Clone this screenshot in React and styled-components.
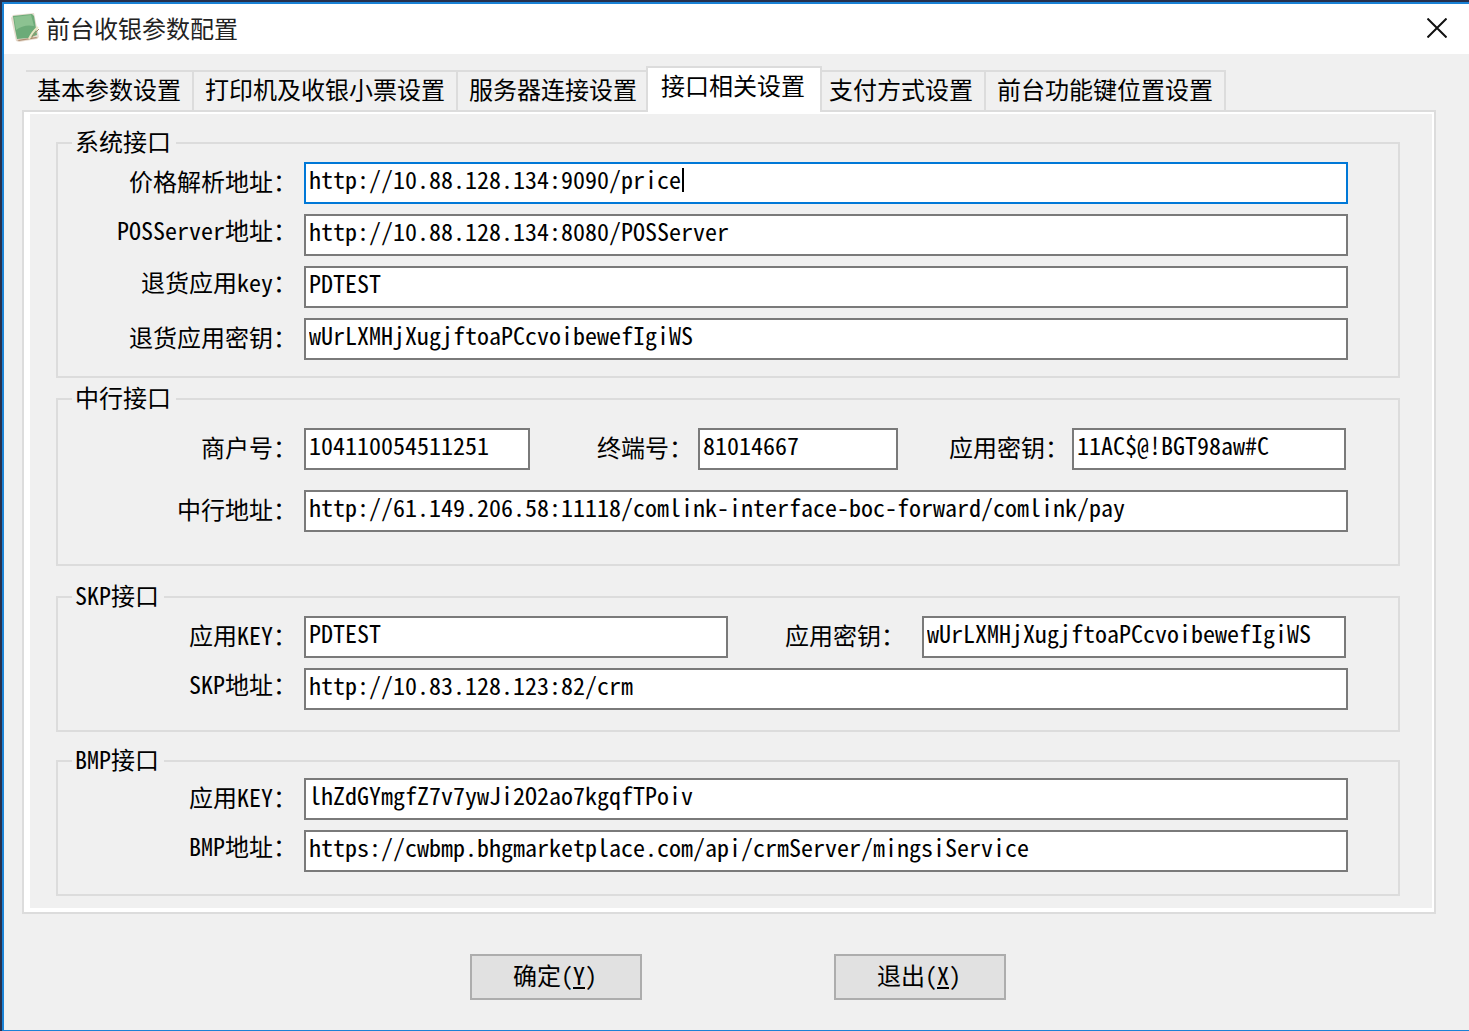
import { useState } from 'react'
import styled, { createGlobalStyle, css } from 'styled-components'

const GlobalStyle = createGlobalStyle`
  * {
    box-sizing: border-box;
  }
  body {
    margin: 0;
    background: #26304d;
    color: #000;
  }
  body, button, input {
    font-family: 'Noto Sans CJK SC', sans-serif;
    font-size: 24px;
    line-height: 24px;
    font-feature-settings: 'hwid';
  }
  button {
    color: #000;
  }
`

const Window = styled.div`
  display: flex;
  flex-direction: column;
  min-height: calc(100vh - 2px);
  margin: 2px 0 0 2px;
  border: solid #1a82d6;
  border-width: 2px 0 1px 2px;
  background: #f0f0f0;
`

const TitleBar = styled.header`
  display: flex;
  align-items: center;
  height: 50px;
  padding: 0 22px 2px 6px;
  background: #fff;
`

const Title = styled.h1`
  flex: 1;
  margin: 0 0 0 6px;
  color: #222;
  font-size: 24px;
  font-weight: 400;
`

const CloseButton = styled.button`
  display: flex;
  padding: 0;
  border: none;
  background: none;
`

const Tabs = styled.nav`
  display: flex;
  align-items: flex-end;
  margin: 12px 33px 0 22px;
`

const Tab = styled.button`
  height: 40px;
  padding: 0 11px 4px;
  border: solid #dcdcdc;
  border-width: 2px 2px 0 0;
  background: #f0f0f0;
  white-space: nowrap;

  ${({ $active }) =>
    $active &&
    css`
      position: relative;
      height: 46px;
      margin: 0 -4px -2px;
      padding: 0 15px 10px 13px;
      border-left-width: 2px;
      background: #fff;
    `}
`

const Panel = styled.main`
  margin: 0 33px 0 18px;
  border: 2px solid #dcdcdc;
  background: #fff;
  padding: 2px 2px 4px 6px;
`

const PanelBody = styled.div`
  padding: 17px 32px 12px 26px;
  background: #f0f0f0;
`

const Group = styled.fieldset`
  display: block;
  min-width: 0;
  margin: ${({ $gap = 0 }) => $gap}px 0 0;
  border: 2px solid #dcdcdc;
  padding: ${({ $top }) => $top}px 50px ${({ $bottom }) => $bottom}px 0;
`

const Legend = styled.legend`
  margin-left: 14px;
  padding: 0 5px 4px 3px;
  line-height: 20px;
`

const Rows = styled.div`
  display: grid;
  gap: ${({ $gap = 10 }) => $gap}px;
`

const Row = styled.div`
  display: grid;
  grid-template-columns: ${({ $columns = '243px 1fr' }) => $columns};
  column-gap: 3px;
  padding-right: ${({ $inset = 0 }) => $inset}px;
`

const Label = styled.label`
  padding-right: ${({ $pad = 4 }) => $pad}px;
  line-height: ${({ $raised }) => ($raised ? 32 : 38)}px;
  text-align: right;
  white-space: nowrap;
`

const InputWrapper = styled.div`
  position: relative;
  min-width: 0;
`

const Input = styled.input`
  display: block;
  width: 100%;
  height: 42px;
  padding: 0 3px 10px;
  border: 2px solid ${({ $focused }) => ($focused ? '#0078d7' : '#7a7a7a')};
  border-radius: 0;
  background: #fff;
  color: #000;
  outline: none;
  caret-color: transparent;
`

const Caret = styled.span`
  position: absolute;
  top: 6px;
  width: 2px;
  height: 24px;
  background: #000;
`

const Footer = styled.footer`
  display: flex;
  justify-content: center;
  gap: 192px;
  padding: 40px 0 30px 3px;
`

const Button = styled.button`
  width: 172px;
  height: 46px;
  padding: 0 2px 4px 0;
  border: 2px solid #adadad;
  background: #e1e1e1;
`

const CHAR_WIDTH = 12

const tabs = [
  '基本参数设置',
  '打印机及收银小票设置',
  '服务器连接设置',
  '接口相关设置',
  '支付方式设置',
  '前台功能键位置设置',
]

const initialValues = {
  priceUrl: 'http://10.88.128.134:9090/price',
  posUrl: 'http://10.88.128.134:8080/POSServer',
  refundKey: 'PDTEST',
  refundSecret: 'wUrLXMHjXugjftoaPCcvoibewefIgiWS',
  bocMerchant: '104110054511251',
  bocTerminal: '81014667',
  bocSecret: '11AC$@!BGT98aw#C',
  bocUrl: 'http://61.149.206.58:11118/comlink-interface-boc-forward/comlink/pay',
  skpKey: 'PDTEST',
  skpSecret: 'wUrLXMHjXugjftoaPCcvoibewefIgiWS',
  skpUrl: 'http://10.83.128.123:82/crm',
  bmpKey: 'lhZdGYmgfZ7v7ywJi2O2ao7kgqfTPoiv',
  bmpUrl: 'https://cwbmp.bhgmarketplace.com/api/crmServer/mingsiService',
}

const NotebookIcon = () => (
  <svg width="30" height="32" viewBox="0 0 30 32" aria-hidden="true">
    <path d="M1 6 L3 3 L24 1 L29 25 L27 27 L9 30 L6 29 Z" fill="#e6dccf" />
    <path d="M7 28 L26 25 L28 26 L9 29 Z" fill="#b08f74" />
    <path d="M3 4 L22 2 L24 4 L27 23 L18 26 L7 27 L5 17 Z" fill="#6cab78" />
    <path d="M4 5 L21 3 L24 14 Q14 12 6 18 Z" fill="#8cc291" />
    <path d="M19 27 Q22 20 28 15" stroke="#e9e6c3" strokeWidth="2" fill="none" />
    <path d="M21 27 Q24 21 29 17" stroke="#a58f6a" strokeWidth="1" fill="none" />
  </svg>
)

const Field = ({ name, label, values, onChange, focused, raised, pad }) => (
  <>
    <Label htmlFor={name} $raised={raised} $pad={pad}>
      {label}：
    </Label>
    <InputWrapper>
      <Input
        id={name}
        name={name}
        type="text"
        spellCheck={false}
        value={values[name]}
        onChange={onChange}
        $focused={focused}
      />
      {focused && (
        <Caret style={{ left: 6 + values[name].length * CHAR_WIDTH }} />
      )}
    </InputWrapper>
  </>
)

const App = () => {
  const [values, setValues] = useState(initialValues)
  const [activeTab, setActiveTab] = useState(3)

  const onChange = (ev) =>
    setValues({ ...values, [ev.target.name]: ev.target.value })

  const form = { values, onChange }

  return (
    <>
      <GlobalStyle />
      <Window>
        <TitleBar>
          <NotebookIcon />
          <Title>前台收银参数配置</Title>
          <CloseButton aria-label="关闭">
            <svg width="20" height="20" viewBox="0 0 20 20">
              <path d="M0.5 0.5 L19.5 19.5 M19.5 0.5 L0.5 19.5" stroke="#111" strokeWidth="2" />
            </svg>
          </CloseButton>
        </TitleBar>
        <Tabs>
          {tabs.map((tab, index) => (
            <Tab
              key={tab}
              $active={index === activeTab}
              onClick={() => setActiveTab(index)}
            >
              {tab}
            </Tab>
          ))}
        </Tabs>
        <Panel>
          <PanelBody>
            <Group $top={7} $bottom={16}>
              <Legend>系统接口</Legend>
              <Rows>
                <Row>
                  <Field name="priceUrl" label="价格解析地址" focused {...form} />
                </Row>
                <Row>
                  <Field name="posUrl" label="POSServer地址" raised {...form} />
                </Row>
                <Row>
                  <Field name="refundKey" label="退货应用key" raised {...form} />
                </Row>
                <Row>
                  <Field name="refundSecret" label="退货应用密钥" {...form} />
                </Row>
              </Rows>
            </Group>
            <Group $gap={9} $top={17} $bottom={32}>
              <Legend>中行接口</Legend>
              <Rows $gap={20}>
                <Row $columns="243px 226fr 162px 200fr 168px 274fr" $inset={2}>
                  <Field name="bocMerchant" label="商户号" {...form} />
                  <Field name="bocTerminal" label="终端号" pad={2} {...form} />
                  <Field name="bocSecret" label="应用密钥" pad={0} {...form} />
                </Row>
                <Row>
                  <Field name="bocUrl" label="中行地址" {...form} />
                </Row>
              </Rows>
            </Group>
            <Group $gap={19} $top={7} $bottom={20}>
              <Legend>SKP接口</Legend>
              <Rows>
                <Row $columns="243px 1fr 188px 1fr" $inset={2}>
                  <Field name="skpKey" label="应用KEY" {...form} />
                  <Field name="skpSecret" label="应用密钥" pad={14} {...form} />
                </Row>
                <Row>
                  <Field name="skpUrl" label="SKP地址" raised {...form} />
                </Row>
              </Rows>
            </Group>
            <Group $gap={17} $top={5} $bottom={22}>
              <Legend>BMP接口</Legend>
              <Rows>
                <Row>
                  <Field name="bmpKey" label="应用KEY" {...form} />
                </Row>
                <Row>
                  <Field name="bmpUrl" label="BMP地址" raised {...form} />
                </Row>
              </Rows>
            </Group>
          </PanelBody>
        </Panel>
        <Footer>
          <Button>
            确定(<u>Y</u>)
          </Button>
          <Button>
            退出(<u>X</u>)
          </Button>
        </Footer>
      </Window>
    </>
  )
}

export default App
